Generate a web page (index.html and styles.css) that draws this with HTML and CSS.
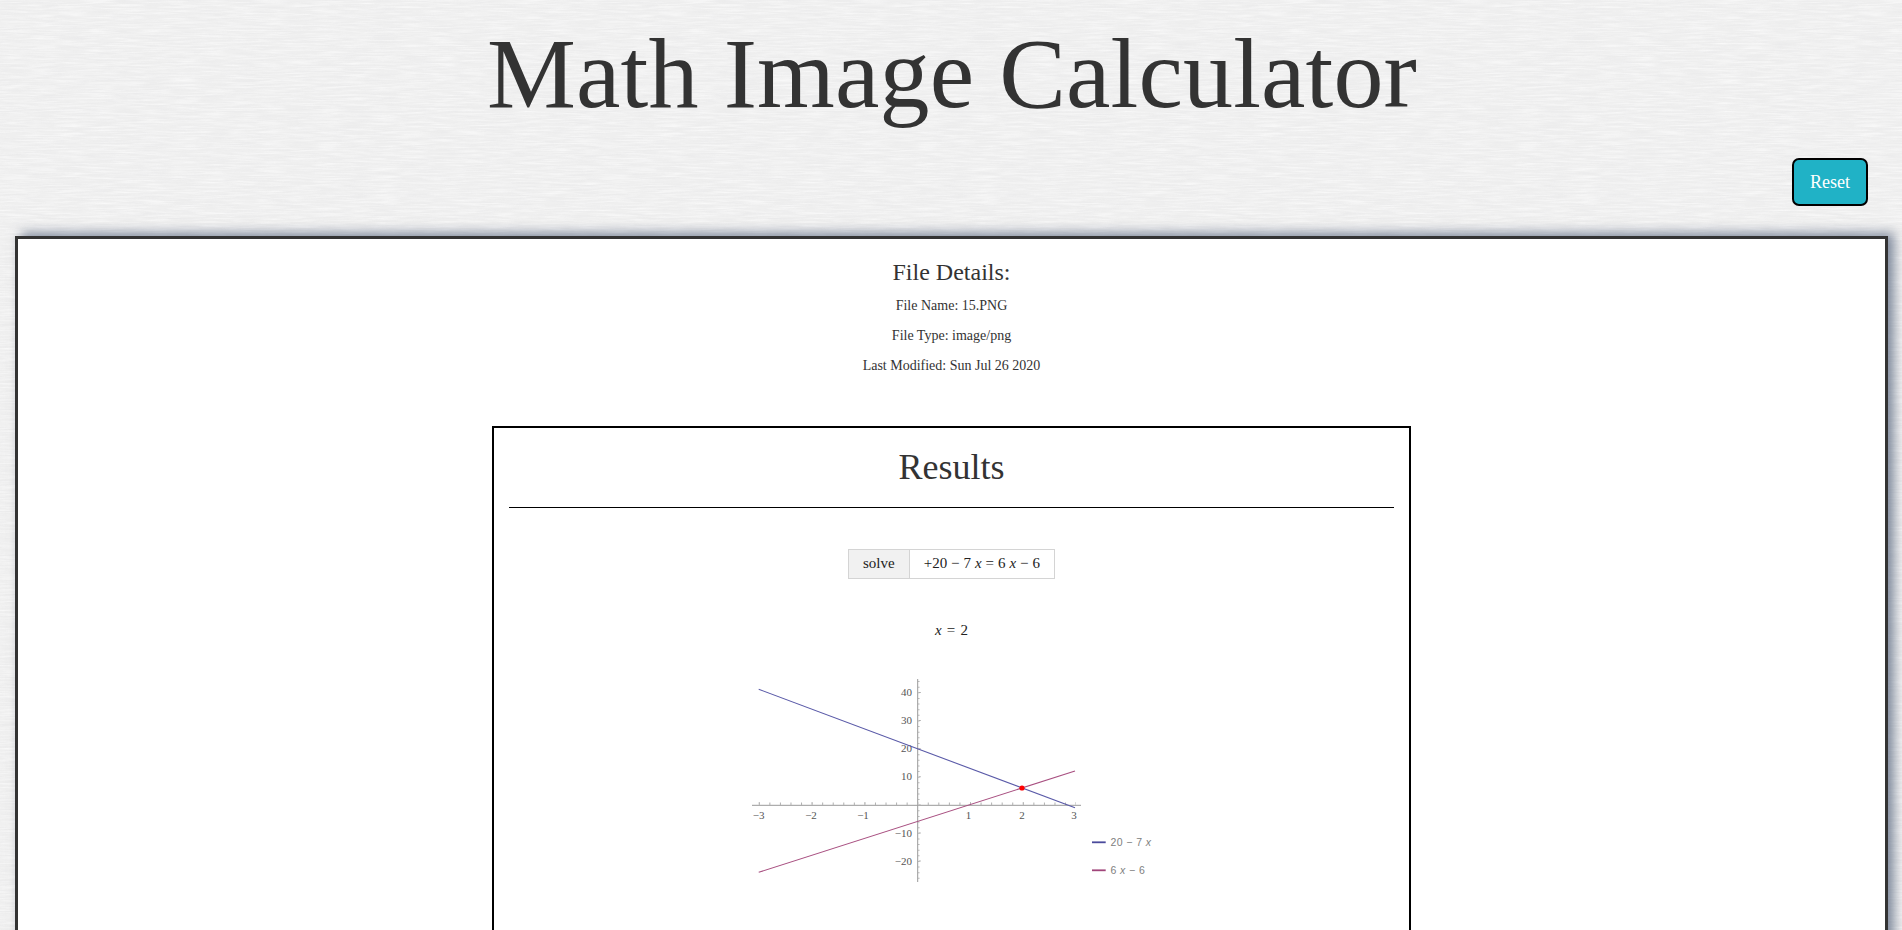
FILE: index.html
```html
<!DOCTYPE html>
<html lang="en">
  <head>
    <meta charset="UTF-8" />
    <title>Math Image Calculator</title>
    <link rel="stylesheet" href="styles.css">
  </head>
  <body>
    <h1 class="page-title">Math Image Calculator</h1>

    <div class="actions">
      <button class="reset-button" type="button">Reset</button>
    </div>

    <div class="main-box">
      <div class="file-details">
        <h2>File Details:</h2>
        <p>File Name: 15.PNG</p>
        <p>File Type: image/png</p>
        <p>Last Modified: Sun Jul 26 2020</p>
      </div>

      <div class="results">
        <h2 class="results-title">Results</h2>
        <hr />

        <div class="query">
          <div class="query-label">solve</div>
          <div class="query-math">+20 − 7 <i>x</i> = 6 <i>x</i> − 6</div>
        </div>

        <div class="answer"><i>x</i> = 2</div>

        <svg class="plot" viewBox="740 670 424 220" width="424" height="220">
          <!-- axes -->
          <line class="axis" x1="752" y1="804.3" x2="1081" y2="804.3" />
          <line class="axis" x1="917.7" y1="678" x2="917.7" y2="881" />

          <!-- minor ticks are dashes, one every 0.2 units -->
          <line class="tick" x1="758.8" y1="802.9" x2="1076" y2="802.9" stroke-width="2.8" stroke-dasharray="1 9.56" />
          <line class="tick" x1="758.8" y1="801.9" x2="1076" y2="801.9" stroke-width="1.4" stroke-dasharray="1 51.8" />
          <line class="tick" x1="918.8" y1="680.1" x2="918.8" y2="881" stroke-width="1.4" stroke-dasharray="1 4.62" />
          <line class="tick" x1="919.8" y1="691" x2="919.8" y2="881" stroke-width="2" stroke-dasharray="1 27.1" />

          <!-- x labels -->
          <text class="label" x="758.7" y="817.5" text-anchor="middle">−3</text>
          <text class="label" x="811" y="817.5" text-anchor="middle">−2</text>
          <text class="label" x="863" y="817.5" text-anchor="middle">−1</text>
          <text class="label" x="968.5" y="817.5" text-anchor="middle">1</text>
          <text class="label" x="1022" y="817.5" text-anchor="middle">2</text>
          <text class="label" x="1074" y="817.5" text-anchor="middle">3</text>

          <!-- y labels -->
          <text class="label" x="912" y="695" text-anchor="end">40</text>
          <text class="label" x="912" y="723" text-anchor="end">30</text>
          <text class="label" x="912" y="751" text-anchor="end">20</text>
          <text class="label" x="912" y="779" text-anchor="end">10</text>
          <text class="label" x="912" y="836" text-anchor="end">−10</text>
          <text class="label" x="912" y="864" text-anchor="end">−20</text>

          <!-- curves -->
          <line class="curve-a" x1="758.7" y1="688.3" x2="1075" y2="806.7" />
          <line class="curve-b" x1="758.7" y1="871.3" x2="1075" y2="770" />
          <circle class="point" cx="1022" cy="787" r="2.6" />

          <!-- legend -->
          <line class="legend-a" x1="1092" y1="841.3" x2="1105.7" y2="841.3" />
          <text class="legend-text" x="1110.5" y="845">20 − 7 <tspan font-style="italic">x</tspan></text>
          <line class="legend-b" x1="1092" y1="869.3" x2="1105.7" y2="869.3" />
          <text class="legend-text" x="1110.5" y="873">6 <tspan font-style="italic">x</tspan> − 6</text>
        </svg>
      </div>
    </div>
  </body>
</html>
```

FILE: styles.css
```css
* {
  box-sizing: border-box;
}

html,
body {
  height: 100%;
}

body {
  margin: 0;
  overflow: hidden;
  font-family: "Liberation Serif", "Times New Roman", serif;
  color: #333;
  background-color: #efefef;
  /* paper grain, stretched sideways so it reads as fine horizontal fibres */
  background-image: url("data:image/svg+xml,%3Csvg xmlns='http://www.w3.org/2000/svg' width='600' height='400'%3E%3Cfilter id='p' x='0' y='0' width='100%25' height='100%25'%3E%3CfeTurbulence type='fractalNoise' baseFrequency='0.035 0.6' numOctaves='3' seed='4' stitchTiles='stitch'/%3E%3CfeColorMatrix values='0 0 0 0 1 0 0 0 0 1 0 0 0 0 1 1.2 0 0 0 -0.48'/%3E%3C/filter%3E%3Cfilter id='q' x='0' y='0' width='100%25' height='100%25'%3E%3CfeTurbulence type='fractalNoise' baseFrequency='0.03 0.45' numOctaves='2' seed='11' stitchTiles='stitch'/%3E%3CfeColorMatrix values='0 0 0 0 0.8 0 0 0 0 0.8 0 0 0 0 0.81 1 0 0 0 -0.38'/%3E%3C/filter%3E%3Crect width='600' height='400' filter='url(%23q)'/%3E%3Crect width='600' height='400' filter='url(%23p)'/%3E%3C/svg%3E");
}

.page-title {
  margin: 16px 0 0;
  padding-left: 2px;
  font-size: 100px;
  font-weight: 400;
  letter-spacing: 0.12px;
  text-align: center;
}

.actions {
  display: flex;
  justify-content: flex-end;
  margin-top: 27px;
  padding-right: 34px;
}

.reset-button {
  height: 48px;
  padding: 0 16px;
  border: 2px solid #000;
  border-radius: 7px;
  background: #20b2c6;
  color: #fff;
  font-family: inherit;
  font-size: 18px;
  cursor: pointer;
}

.main-box {
  margin: 30px 14px 0 15px;
  padding: 20px 15px 40px;
  border: 3px solid #333;
  background: #fff;
  box-shadow: 6px -3px 11px rgba(85, 100, 125, 0.75);
  color: #333;
}

.file-details {
  text-align: center;
}

.file-details h2 {
  margin: 0 0 12px;
  font-size: 24px;
  font-weight: 400;
  color: #333;
}

.file-details p {
  margin: 0 0 14px;
  font-size: 14px;
}

.results {
  width: 919px;
  margin: 52px auto 0;
  padding: 18px 15px 60px;
  border: 2px solid #000;
  text-align: center;
}

.results-title {
  margin: 0;
  font-size: 36px;
  font-weight: 400;
  color: #333;
}

.results hr {
  margin: 19px 0 0;
  border: 0;
  border-top: 1px solid #000;
}

.query {
  display: flex;
  justify-content: center;
  margin-top: 41px;
  font-size: 15px;
  line-height: 18px;
}

.query-label {
  padding: 4px 14px 6px;
  border: 1px solid #d4d4d4;
  background: #f1f1f1;
  color: #222;
}

.query-math {
  padding: 4px 14px 6px;
  border: 1px solid #d4d4d4;
  border-left: 0;
  color: #222;
  word-spacing: 0.2px;
}

.answer {
  margin-top: 43px;
  font-size: 15px;
  word-spacing: 1.5px;
  color: #222;
}

.plot {
  display: block;
  margin: 32px auto 0;
}

.axis {
  stroke: #999;
  stroke-width: 1;
}

.tick {
  stroke: #b0b0b0;
}

.label {
  font-size: 11px;
  fill: #555;
}

.curve-a {
  stroke: #5a5aa8;
  stroke-width: 1.1;
}

.curve-b {
  stroke: #a84f80;
  stroke-width: 1.1;
}

.point {
  fill: #f00;
}

.legend-a {
  stroke: #4a4a9c;
  stroke-width: 1.8;
}

.legend-b {
  stroke: #a0457a;
  stroke-width: 1.8;
}

.legend-text {
  font-family: "Liberation Sans", Arial, sans-serif;
  font-size: 10.5px;
  letter-spacing: 0.4px;
  fill: #808080;
}
```
